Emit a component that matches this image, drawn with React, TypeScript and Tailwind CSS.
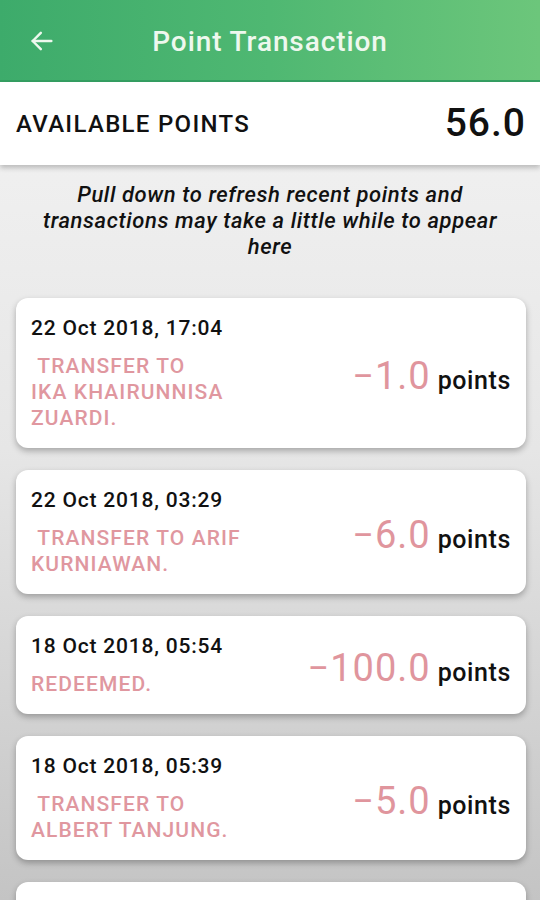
import React from "react";

const font = { fontFamily: "Roboto, 'Liberation Sans', sans-serif" };

type Tx = { date: string; lines: string[]; amount: string };

const txs: Tx[] = [
  { date: "22 Oct 2018, 17:04", lines: ["\u00a0TRANSFER TO", "IKA KHAIRUNNISA", "ZUARDI."], amount: "\u22121.0" },
  { date: "22 Oct 2018, 03:29", lines: ["\u00a0TRANSFER TO ARIF", "KURNIAWAN."], amount: "\u22126.0" },
  { date: "18 Oct 2018, 05:54", lines: ["REDEEMED."], amount: "\u2212100.0" },
  { date: "18 Oct 2018, 05:39", lines: ["\u00a0TRANSFER TO", "ALBERT TANJUNG."], amount: "\u22125.0" },
];

function Card({ tx }: { tx: Tx }) {
  return (
    <div className="flex items-center justify-between rounded-xl bg-white pl-[15px] pr-[15px] pt-[19px] pb-[17px] shadow-[0_3px_6px_rgba(0,0,0,0.28)]">
      <div className="flex flex-col">
        <div className="text-[21px] leading-[22px] font-medium text-[#111] tracking-[0.8px]">{tx.date}</div>
        <div className="mt-[14px] text-[21px] leading-[26px] font-medium text-[#e0979f] tracking-[1.1px]">
          {tx.lines.map((l, i) => (
            <div key={i}>{l}</div>
          ))}
        </div>
      </div>
      <div className="flex items-baseline gap-[7px] mt-[4px]">
        <span className="text-[38px] leading-none text-[#e0959d] tracking-[1px]">{tx.amount}</span>
        <span className="text-[25px] leading-none font-medium text-[#111] tracking-[0.6px]">points</span>
      </div>
    </div>
  );
}

export default function App() {
  return (
    <div style={font} className="w-[540px] h-[900px] overflow-hidden flex flex-col bg-gradient-to-b from-[#f5f5f5] via-[#e6e6e6] to-[#c4c4c4]">
      <div className="h-[82px] shrink-0 relative flex items-center bg-gradient-to-r from-[#3dab6b] via-[#4fb872] to-[#6cc67b] border-b-2 border-[#35a062]">
        <div className="pl-[28px] pt-[2px]">
          <svg width="28" height="28" viewBox="0 0 24 24" fill="none" stroke="#eef8ee" strokeWidth="2.1" strokeLinecap="round" strokeLinejoin="round">
            <path d="M20 12H4" />
            <path d="M11 5l-7 7 7 7" />
          </svg>
        </div>
        <div className="absolute inset-0 flex items-center justify-center pt-[3px] pointer-events-none">
          <span className="text-[28px] font-medium text-[#eef8ee] tracking-[0.9px]">Point Transaction</span>
        </div>
      </div>
      <div className="h-[83px] shrink-0 bg-white flex items-center justify-between pl-[16px] pr-[14px] shadow-[0_3px_5px_rgba(0,0,0,0.22)] relative z-10">
        <span className="text-[24px] font-medium text-[#111] tracking-[1.3px]">AVAILABLE POINTS</span>
        <span className="text-[39px] font-medium text-[#111] tracking-[1px]">56.0</span>
      </div>
      <div className="pt-[17px] pb-[38px] text-center italic font-medium text-[22px] leading-[26px] text-[#111] tracking-[0.6px]">
        Pull down to refresh recent points and
        <br />
        transactions may take a little while to appear
        <br />
        here
      </div>
      <div className="flex flex-col gap-[22px] pl-[16px] pr-[14px]">
        {txs.map((t, i) => (
          <Card key={i} tx={t} />
        ))}
        <div className="h-[60px] rounded-xl bg-white shadow-[0_3px_6px_rgba(0,0,0,0.28)]" />
      </div>
    </div>
  );
}
